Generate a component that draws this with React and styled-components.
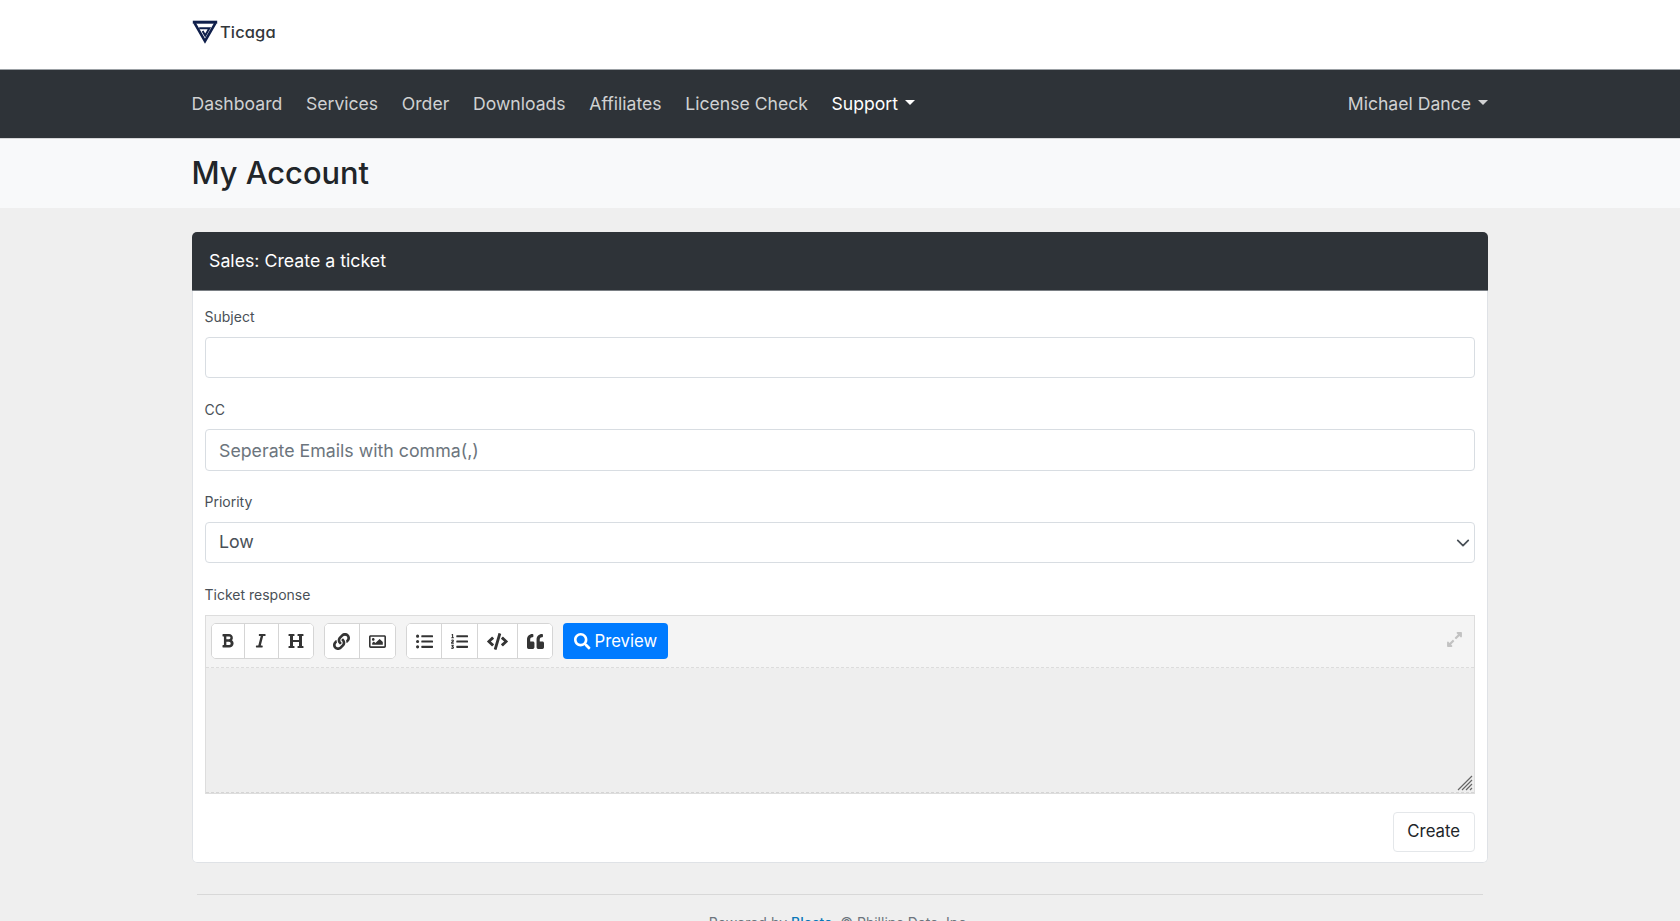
import React from 'react';
import styled, { createGlobalStyle } from 'styled-components';
import { FaBold, FaItalic, FaHeading, FaLink, FaRegImage, FaListUl, FaListOl, FaCode, FaQuoteLeft, FaSearch, FaExpandAlt } from 'react-icons/fa';

const Global = createGlobalStyle`
  html, body { margin: 0; padding: 0; height: 921px; overflow: hidden; }
  body { background: #efefef; font-family: Inter, "Liberation Sans", sans-serif; color: #212529; font-size: 16px; line-height: 1.5; }
  * { box-sizing: border-box; }
`;
const Container = styled.div`width: 1296px; margin-left: calc(50% - 648.5px);`;
const LogoBar = styled.header`background: #fff; height: 70px; display: flex; align-items: center; border-bottom: 1px solid #9ba0a4;`;
const LogoRow = styled.div`display: flex; align-items: center; gap: 2.5px; height: 24px; margin-top: -6px;`;
const LogoText = styled.span`font-size: 16.5px; font-weight: 500; color: #33373b; line-height: 24px; letter-spacing: .1px; font-feature-settings: 'cv11' 1;`;
const Nav = styled.nav`background: #2e3338; height: 68.7px; border-bottom: 1px solid #d5d6d8;`;
const NavInner = styled(Container)`display: flex; align-items: center; height: 100%; justify-content: space-between;`;
const NavList = styled.div`display: flex; gap: 23.7px;`;
const NavLink = styled.a`color: ${p => p.$active ? '#fff' : 'rgba(255,255,255,.78)'}; font-size: 17.6px; line-height: 27px; cursor: pointer; display: flex; align-items: center;`;
const Caret = styled.span`display: inline-block; margin-left: 6.5px; border-top: 5.5px solid currentColor; border-left: 5px solid transparent; border-right: 5px solid transparent; margin-top: -3px;`;
const PageHead = styled.div`background: #f8f9fa; height: 69.3px; display: flex; align-items: center;`;
const Title = styled.h1`font-size: 30.8px; line-height: 38px; font-weight: 500; margin: 0; color: #212529;`;
const Main = styled(Container)`padding-top: 24px;`;
const Card = styled.section`border-radius: 5px; overflow: hidden; height: 631px; display: flex; flex-direction: column;`;
const CardHead = styled.div`background: #2e3338; color: #fff; height: 59.5px; flex: none; padding: 1px 17.5px 0; display: flex; align-items: center; font-size: 17.75px; border-bottom: 1px solid #7a7f84;`;
const CardBody = styled.form`flex: 1; background: #fff; border: 1px solid #dfe2e6; border-top: 0; border-radius: 0 0 5px 5px; padding: 15px 12px 0 12px; display: flex; flex-direction: column;`;
const Field = styled.div`margin-bottom: 20.5px;`;
const Label = styled.label`display: block; font-size: 14px; line-height: 21px; color: #495057; margin-bottom: 9.5px;`;
const Input = styled.input`display: block; width: 100%; height: 41.5px; font: inherit; font-size: 17.75px; line-height: 27px; padding: 0 13.5px; color: #495057; background: #fff; border: 1.5px solid #d8dde2; border-radius: 4px; outline: none; &::placeholder { color: #6c757d; opacity: 1; }`;
const Select = styled.select`display: block; width: 100%; height: 41.5px; font: inherit; font-size: 17.75px; padding: 0 13.5px; color: #495057; background: #fff; border: 1.5px solid #d8dde2; border-radius: 4px; outline: none; appearance: none; background-image: url("data:image/svg+xml,%3csvg xmlns='http://www.w3.org/2000/svg' viewBox='0 0 16 16'%3e%3cpath fill='none' stroke='%23495057' stroke-linecap='round' stroke-linejoin='round' stroke-width='2' d='M2 5l6 6 6-6'/%3e%3c/svg%3e"); background-repeat: no-repeat; background-position: right 4px center; background-size: 13.5px 13.5px;`;
const Editor = styled.div`border: 1px solid #dddddd; margin-top: .5px;`;
const Toolbar = styled.div`position: relative; height: 52px; background: #f4f4f4; border-bottom: 1px dashed #dcdcdc; padding: 7px 5px; display: flex; gap: 10px; align-items: flex-start;`;
const Group = styled.div`display: flex; height: 36.5px; background: #fff; border: 1px solid #d5d5d5; border-radius: 5px; overflow: hidden;`;
const ToolButton = styled.button`width: ${p => p.$w}px; height: 100%; border: 0; border-right: 1px solid #d5d5d5; background: #fff; color: #343434; padding: 0; display: flex; align-items: center; justify-content: center; &:last-child { border-right: 0; }`;
const Preview = styled.button`height: 36.5px; width: 105px; border: 0; border-radius: 4px; background: #007bff; color: #fff; font: inherit; font-size: 16.7px; display: flex; align-items: center; justify-content: center; gap: 4px; padding: 1px 0 0;`;
const Expand = styled.span`position: absolute; right: 11px; top: 15px; color: #c2c2c2; display: flex;`;
const Body = styled.div`position: relative; height: 125px; background: #eeeeee; border-bottom: 1px dashed #d5d5d5;`;
const Grip = styled.svg`position: absolute; right: 1px; bottom: 1px;`;
const Actions = styled.div`display: flex; justify-content: flex-end; margin-top: 18px;`;
const Create = styled.button`height: 40px; width: 81.5px; font: inherit; font-size: 16.8px; color: #212529; background: #fff; border: 1.5px solid #e4e7ea; border-radius: 4px; padding: 0;`;
const Footer = styled.footer`margin: 31px 5px 0; border-top: 1px solid #d8d8d8; padding-top: 17px; text-align: center; font-size: 14px; line-height: 21px; color: #6c757d;`;
const Link = styled.a`color: #0b78b8; font-weight: 500;`;

const Logo = () => (
  <svg width="26" height="24" viewBox="0 0 26 24" aria-hidden="true" fill="none" stroke="#0f1f4b" strokeLinejoin="miter">
    <path d="M.8 2.2h24.4" strokeWidth="3" />
    <path d="M2.6 3.2L13 21.2 23.4 3.2" strokeWidth="2.6" />
    <path d="M7.2 8.2H17.4L13.2 15.5 10.6 11" strokeWidth="2" />
  </svg>
);

const navItems = ['Dashboard', 'Services', 'Order', 'Downloads', 'Affiliates', 'License Check'];

export default function App() {
  return (
    <>
      <Global />
      <LogoBar>
        <Container>
          <LogoRow><Logo /><LogoText>Ticaga</LogoText></LogoRow>
        </Container>
      </LogoBar>
      <Nav>
        <NavInner>
          <NavList>
            {navItems.map(n => <NavLink key={n}>{n}</NavLink>)}
            <NavLink $active>Support<Caret /></NavLink>
          </NavList>
          <NavLink>Michael Dance<Caret /></NavLink>
        </NavInner>
      </Nav>
      <PageHead>
        <Container><Title>My Account</Title></Container>
      </PageHead>
      <Main>
        <Card>
          <CardHead>Sales: Create a ticket</CardHead>
          <CardBody>
            <Field>
              <Label>Subject</Label>
              <Input type="text" />
            </Field>
            <Field>
              <Label>CC</Label>
              <Input type="text" placeholder="Seperate Emails with comma(,)" />
            </Field>
            <Field>
              <Label>Priority</Label>
              <Select defaultValue="Low"><option>Low</option></Select>
            </Field>
            <Label>Ticket response</Label>
            <Editor>
              <Toolbar>
                <Group>
                  <ToolButton $w={33}><FaBold size={15.5} /></ToolButton>
                  <ToolButton $w={34}><FaItalic size={15.5} /></ToolButton>
                  <ToolButton $w={34.3}><FaHeading size={16} /></ToolButton>
                </Group>
                <Group>
                  <ToolButton $w={35.3}><FaLink size={17} /></ToolButton>
                  <ToolButton $w={35}><FaRegImage size={17} /></ToolButton>
                </Group>
                <Group>
                  <ToolButton $w={35}><FaListUl size={17} /></ToolButton>
                  <ToolButton $w={36}><FaListOl size={17} /></ToolButton>
                  <ToolButton $w={40}><FaCode size={21} /></ToolButton>
                  <ToolButton $w={34}><FaQuoteLeft size={17} /></ToolButton>
                </Group>
                <Preview type="button"><FaSearch size={16.5} />Preview</Preview>
                <Expand><FaExpandAlt size={17} /></Expand>
              </Toolbar>
              <Body>
                <Grip width="16" height="16" viewBox="0 0 16 16">
                  <path d="M15 1L1 15M15 5L5 15M15 9L9 15M15 13L13 15" stroke="#666" strokeWidth="1.2" fill="none" />
                </Grip>
              </Body>
            </Editor>
            <Actions><Create type="button">Create</Create></Actions>
          </CardBody>
        </Card>
        <Footer>Powered by <Link>Blesta</Link>, © Phillips Data, Inc.</Footer>
      </Main>
    </>
  );
}
